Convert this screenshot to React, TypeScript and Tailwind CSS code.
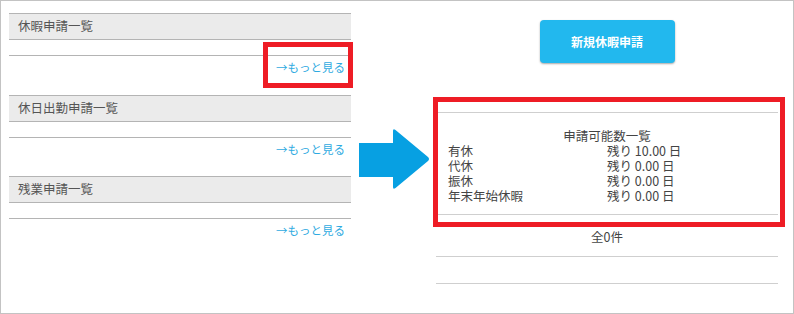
const FONT = "font-['Noto_Sans_CJK_JP','Noto_Sans',sans-serif]";

const SECTIONS = ['休暇申請一覧', '休日出勤申請一覧', '残業申請一覧'];

const BALANCES: [string, string][] = [
  ['有休', '残り 10.00 日'],
  ['代休', '残り 0.00 日'],
  ['振休', '残り 0.00 日'],
  ['年末年始休暇', '残り 0.00 日'],
];

function ListSection({ title }: { title: string }) {
  return (
    <div className="h-[81.5px]">
      <div className="flex h-[27px] items-center border-y border-[#b4b4b4] bg-[#ebebeb] px-[9px] text-[12.5px] text-[#555]">
        {title}
      </div>
      <div className="h-[16px] border-b border-[#b4b4b4]" />
      <div className="pt-[2px] pr-[6px] text-right text-[11.5px] leading-[18px] text-[#2eaae1]">
        →もっと見る
      </div>
    </div>
  );
}

function BlueArrow() {
  return (
    <svg width="72" height="64" viewBox="0 0 72 64" className="absolute left-[358px] top-[127px]">
      <path
        d="M0 15 H34 V3 Q34 0 36.5 2 L69 29 Q71 31 69 33 L36.5 60 Q34 62 34 59 V49 H0 Z"
        fill="#07a0e2"
      />
    </svg>
  );
}

export default function App() {
  return (
    <div
      className={`relative flex h-[314px] w-[794px] items-start gap-[85px] border border-[#c3c3c3] bg-white pl-[8px] pt-[12px] ${FONT}`}
    >
      {/* left: lists */}
      <div className="w-[342px]">
        {SECTIONS.map((s) => (
          <ListSection key={s} title={s} />
        ))}
      </div>

      {/* right: new request + balances */}
      <div className="flex w-[342px] flex-col text-[12.5px] text-[#444]">
        <button className="mx-auto mt-[7px] h-[43px] w-[135px] rounded-[4px] bg-[#22b8ee] text-[12px] font-bold text-white shadow-[0_1px_2px_rgba(0,0,0,0.35)]">
          新規休暇申請
        </button>

        <div className="mt-[49px] border-y border-[#cfcfcf] pb-[11px] pt-[15px] leading-[15px]">
          <div className="text-center">申請可能数一覧</div>
          {BALANCES.map(([label, value]) => (
            <div key={label} className="grid grid-cols-2">
              <span className="pl-[12px]">{label}</span>
              <span>{value}</span>
            </div>
          ))}
        </div>

        <div className="border-b border-[#cfcfcf] pb-[10px] pt-[13px] text-center leading-[18px]">
          全0件
        </div>
        <div className="h-[27px] border-b border-[#cfcfcf]" />
      </div>

      <BlueArrow />

      {/* red annotation boxes */}
      <div className="absolute left-[262px] top-[41px] h-[46px] w-[90px] border-[5px] border-[#ee1c25]" />
      <div className="absolute left-[432px] top-[96px] h-[130px] w-[352px] border-[5px] border-[#ee1c25]" />
    </div>
  );
}
